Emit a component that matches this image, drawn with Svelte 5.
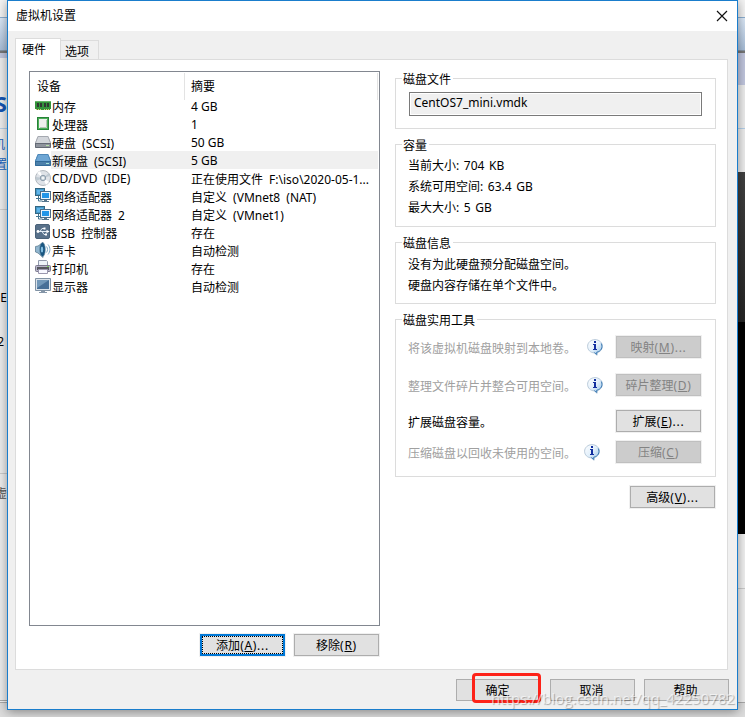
<script>
  let selected = $state(3);

  const devices = [
    { icon: "memory", name: "内存", summary: "4 GB" },
    { icon: "cpu", name: "处理器", summary: "1" },
    { icon: "disk", name: "硬盘 (SCSI)", summary: "50 GB" },
    { icon: "disk-blue", name: "新硬盘 (SCSI)", summary: "5 GB" },
    { icon: "cd", name: "CD/DVD (IDE)", summary: "正在使用文件 F:\\iso\\2020-05-1..." },
    { icon: "network", name: "网络适配器", summary: "自定义 (VMnet8 (NAT)" },
    { icon: "network", name: "网络适配器 2", summary: "自定义 (VMnet1)" },
    { icon: "usb", name: "USB 控制器", summary: "存在" },
    { icon: "sound", name: "声卡", summary: "自动检测" },
    { icon: "printer", name: "打印机", summary: "存在" },
    { icon: "display", name: "显示器", summary: "自动检测" },
  ];

  const utilities = [
    { text: "将该虚拟机磁盘映射到本地卷。", label: "映射", key: "M", dots: "...", disabled: true, row: "map" },
    { text: "整理文件碎片并整合可用空间。", label: "碎片整理", key: "D", dots: "", disabled: true, row: "defrag" },
    { text: "扩展磁盘容量。", label: "扩展", key: "E", dots: "...", disabled: false, row: "expand" },
    { text: "压缩磁盘以回收未使用的空间。", label: "压缩", key: "C", dots: "", disabled: true, row: "compact" },
  ];

  // Latin text sits a pixel higher than Chinese in the list
  const isLatin = (text) => /^[\x00-\x7f]+$/.test(text);
</script>

{#snippet deviceIcon(name)}
  <svg class="icon" width="16" height="16" viewBox="0 0 16 16">
    {#if name === "memory"}
      <path d="M0 3h16v8h-1v1H1v-1H0z" fill="#34933b" />
      <path d="M0 3h16v1H0z" fill="#65b767" />
      <path d="M2 5h2v4H2zM5 5h2v4H5zM9 5h2v4H9zM12 5h2v4h-2z" fill="#303832" />
      <path d="M1 11h1v1H1zM3 11h1v1H3zM5 11h1v1H5zM9 11h1v1H9zM11 11h1v1h-1zM13 11h1v1h-1z" fill="#d9ca70" />
    {:else if name === "cpu"}
      <rect x="2.5" y="1.5" width="11" height="12" fill="#cfe3cc" stroke="#268238" />
      <rect x="3.5" y="2.5" width="9" height="10" fill="#eee" stroke="#4baf58" />
      <path d="M5 11.5h6.5V4" fill="none" stroke="#b7c3b8" />
    {:else if name === "disk" || name === "disk-blue"}
      <path d="M3 2h10l3 7v5H0V9z" fill={name === "disk" ? "#c5c8ce" : "#71a4ce"} />
      <path d="M3 2h10l3 7H0z" fill={name === "disk" ? "#d3d6db" : "#6ea6d4"} />
      <path d="M3 2.5h10M.5 9L3 2.5M15.5 9L13 2.5" fill="none" stroke={name === "disk" ? "#a5a9b0" : "#4f88b8"} />
      <path d="M1 10h14v3H1z" fill={name === "disk" ? "#8f949d" : "#4c80aa"} />
      <path d="M0 9.5h16M.5 9v4.5h15V9" fill="none" stroke={name === "disk" ? "#646a75" : "#326b98"} />
      <path d="M11 11h3v1h-3z" fill={name === "disk" ? "#b9e3a8" : "#a5e4d8"} />
    {:else if name === "cd"}
      <circle cx="8" cy="8" r="7.5" fill="#dfe3e8" stroke="#a3a9b1" stroke-width=".8" />
      <path d="M8 8L2 3l3-2zM8 8l6 4-3 3z" fill="#fff" />
      <path d="M8 8L1 7v4zM8 8l7-2-1-3z" fill="#bfcad2" />
      <circle cx="8" cy="8" r="2.7" fill="#cbd5dc" stroke="#8d9dac" />
      <circle cx="8" cy="8" r="1" fill="#fff" />
    {:else if name === "network"}
      <rect x=".5" y=".5" width="9" height="7" fill="#4698c8" stroke="#336782" />
      <path d="M2 2h6v4H2z" fill="#5fb5ea" />
      <path d="M3.5 8v5h4M1 10.5h5" fill="none" stroke="#447590" />
      <rect x="5.5" y="3.5" width="10" height="8" fill="#eaf5fc" stroke="#4b6d89" />
      <path d="M7 5h7v5H7z" fill="#2396e8" />
      <path d="M9 12h3v1h2v1H7v-1h2z" fill="#56778e" />
    {:else if name === "usb"}
      <rect x=".5" y=".5" width="14" height="14" rx="1.5" fill="#58718a" stroke="#4a6279" />
      <path d="M2 7.5h11M5 7.5l2-3h2M7 7.5l2 3h3" fill="none" stroke="#e1ebf4" />
      <circle cx="3" cy="7.5" r="1.4" fill="#fff" />
      <path d="M8.5 3.5h2v2h-2zM10 9.5h2v2h-2zM11.5 5.7l3 1.8-3 1.8z" fill="#fff" />
    {:else if name === "sound"}
      <path d="M.5 4.500L3 4l5-3.500v15L3 11 .5 10z" fill="#91b6cf" stroke="#52738a" stroke-width=".7" />
      <ellipse cx="7.500" cy="7.500" rx="2.800" ry="7" fill="#195782" stroke="#6d8ea5" stroke-width=".6" />
      <ellipse cx="7" cy="7.500" rx="1.200" ry="3" fill="#83bfe2" />
      <path d="M11.500 4.500c1.400 2 1.400 4 0 6M13 2.500c2.500 3 2.500 7 0 10" fill="none" stroke="#6d9fbd" stroke-width=".9" />
    {:else if name === "printer"}
      <path d="M3.500.5h8l1 1V6h-9z" fill="#edf3fa" stroke="#929aad" />
      <rect x=".5" y="5.500" width="15" height="6" rx="1" fill="#b6b4c8" stroke="#7b788e" />
      <path d="M2 7h12v3H2z" fill="#54565d" />
      <path d="M3.500 9.500h9v4h-9z" fill="#f8f8ff" stroke="#9a97ae" />
      <path d="M12 6h2v1h-2z" fill="#7bcf62" />
    {:else}
      <path d="M.5.5h15v12H.5z" fill="#dce3eb" stroke="#8193a5" />
      <path d="M2 2h12v9H2z" fill="#486f97" />
      <path d="M2 2h12L2 10z" fill="#7398b9" />
      <path d="M6 13h4v1h2v1H4v-1h2z" fill="#8596a8" />
    {/if}
  </svg>
{/snippet}

{#snippet infoIcon()}
  <svg class="info" width="16" height="17" viewBox="0 0 16 17">
    <defs>
      <linearGradient id="bubble" x2="1" y2="1">
        <stop stop-color="#fff" />
        <stop offset=".5" stop-color="#e1effb" />
        <stop offset="1" stop-color="#8ebce4" />
      </linearGradient>
    </defs>
    <path d="M8 .6c4.2 0 7.4 3 7.4 6.7 0 3.2-2.1 5.600-5.300 6.300v2.700l-3-2.400C3.400 13.600.6 11 .6 7.300.6 3.600 3.800.6 8 .6z" fill="url(#bubble)" stroke="#a9bed1" stroke-width=".8" />
    <path d="M14.300 4.500c1.800 4-.3 8-4.600 8.700v2.200l-2.300-1.900" fill="none" stroke="#417eb6" />
    <path d="M7 2h2v2H7zM6 5h3v5h1v1H6v-1h1V6H6z" fill="#112e9f" />
  </svg>
{/snippet}

<div class="desktop">
  <div class="behind left">
    <div class="ribbon"></div>
    <div class="ribbon-edge"></div>
    <div class="page-title"><b>OS</b></div>
    <div class="links"><span>机</span><span>设置</span></div>
    <div class="notes"><span>DE</span><span>2</span></div>
    <div class="description"><span>虚</span></div>
    <div class="status"></div>
  </div>

  <main class="dialog">
    <header class="titlebar">
      <span>虚拟机设置</span>
      <svg width="12" height="12" viewBox="0 0 12 12" aria-label="关闭">
        <path d="M1 1l10 10M11 1L1 11" stroke="#111" stroke-width="1.15" />
      </svg>
    </header>

    <nav class="tabs">
      <div class="tab active">硬件</div>
      <div class="tab">选项</div>
    </nav>

    <section class="panel">
      <div class="hardware">
        <div class="device-list">
          <div class="list-head"><span>设备</span><span>摘要</span></div>
          {#each devices as device, i}
            <!-- svelte-ignore a11y_click_events_have_key_events, a11y_no_static_element_interactions -->
            <div class="device" class:selected={selected === i} onclick={() => (selected = i)}>
              {@render deviceIcon(device.icon)}
              <span class="name" class:latin={isLatin(device.name)}>{device.name}</span>
              <span class="summary" class:latin={isLatin(device.summary)}>{device.summary}</span>
            </div>
          {/each}
        </div>
        <div class="list-actions">
          <button class="focused">添加<span class="key">(<u>A</u>)...</span></button>
          <button>移除<span class="key">(<u>R</u>)</span></button>
        </div>
      </div>

      <div class="details">
        <fieldset class="file">
          <legend>磁盘文件</legend>
          <div class="file-name">CentOS7_mini.vmdk</div>
        </fieldset>
        <fieldset class="capacity">
          <legend>容量</legend>
          <p>当前大小: 704 KB</p>
          <p>系统可用空间: 63.4 GB</p>
          <p>最大大小: 5 GB</p>
        </fieldset>
        <fieldset class="disk-info">
          <legend>磁盘信息</legend>
          <p>没有为此硬盘预分配磁盘空间。</p>
          <p>硬盘内容存储在单个文件中。</p>
        </fieldset>
        <fieldset class="utilities">
          <legend>磁盘实用工具</legend>
          {#each utilities as item}
            <div class="utility {item.row}" class:muted={item.disabled}>
              <span class="hint">{item.text}</span>
              {#if item.disabled}{@render infoIcon()}{/if}
              <button disabled={item.disabled}>{item.label}<span class="key">(<u>{item.key}</u>){item.dots}</span></button>
            </div>
          {/each}
        </fieldset>
        <button class="advanced">高级<span class="key">(<u>V</u>)...</span></button>
      </div>
    </section>

    <footer>
      <button>确定</button>
      <button>取消</button>
      <button>帮助</button>
    </footer>
  </main>

  <div class="behind right">
    <div class="ribbon"></div>
    <div class="ribbon-edge"></div>
    <div class="page-top"></div>
    <div class="page-line"></div>
    <div class="screen-top"></div>
    <div class="screen"></div>
    <div class="page-bottom"></div>
  </div>

  <div class="highlight"></div>
  <div class="watermark">https://blog.csdn.net/qq_42250782</div>
</div>

<style>
  :global(body) {
    margin: 0;
    overflow: hidden;
  }

  .desktop {
    position: relative;
    display: grid;
    grid-template-columns: 7px 731px 7px;
    width: 745px;
    height: 717px;
    overflow: hidden;
    background: #dedede;
    color: #000;
    font: 12px/18px "Noto Sans", "Noto Sans CJK SC", sans-serif;
  }

  .desktop * {
    box-sizing: border-box;
  }

  .dialog {
    z-index: 1;
    display: flex;
    flex-direction: column;
    height: 710px;
    border: 1px solid #1a7dcc;
    background: #f0f0f0;
    box-shadow: 0 2px 10px rgba(0, 0, 0, 0.4);
  }

  .titlebar {
    display: flex;
    flex: none;
    justify-content: space-between;
    align-items: center;
    height: 30px;
    padding: 0 9px 0 8px;
    background: #fff;
  }

  .tabs {
    display: flex;
    flex: none;
    align-items: flex-end;
    height: 29px;
    margin-bottom: -1px;
    padding-left: 7px;
    z-index: 1;
  }

  .tab {
    width: 38px;
    height: 20px;
    padding-left: 4px;
    border: 1px solid #dcdcdc;
    border-left: 0;
    line-height: 21px;
  }

  .tab.active {
    width: 46px;
    height: 22px;
    padding-left: 6px;
    border-left: 1px solid #dcdcdc;
    border-bottom: 0;
    background: #fff;
  }

  .panel {
    display: flex;
    flex: none;
    gap: 15px;
    width: 713px;
    height: 611px;
    margin-left: 7px;
    padding: 11px 11px 0 13px;
    border: 1px solid #dcdcdc;
    background: #fff;
  }

  .hardware {
    width: 351px;
  }

  .device-list {
    height: 555px;
    border: 1px solid #828790;
  }

  .list-head {
    display: grid;
    grid-template-columns: 155px 193px;
    height: 25px;
    padding-top: 1px;
    line-height: 27px;
  }

  .list-head span {
    padding-left: 7px;
    border-right: 1px solid #e3e3e3;
  }

  .list-head span + span {
    padding-left: 6px;
  }

  .device {
    display: grid;
    grid-template-columns: 16px 133px 194px;
    height: 18px;
    padding-left: 5px;
    line-height: 21px;
    white-space: nowrap;
  }

  .device span {
    height: 18px;
  }

  .device.selected .name,
  .device.selected .summary {
    background: #f0f0f0;
  }

  .name {
    padding-left: 1px;
    word-spacing: 3px;
  }

  .summary {
    padding-left: 7px;
    word-spacing: 3px;
  }

  .latin {
    line-height: 19px;
  }

  .summary.latin {
    word-spacing: 0;
  }

  .icon,
  .info {
    display: block;
  }

  .icon {
    margin-top: 1px;
  }

  .list-actions {
    display: flex;
    justify-content: flex-end;
    gap: 9px;
    margin: 8px 1px 0 0;
  }

  button {
    display: block;
    flex: none;
    width: 85px;
    height: 22px;
    padding: 1px 0 0;
    border: 1px solid #adadad;
    border-radius: 0;
    background: #e1e1e1;
    box-shadow: 0 0 0 1px #f0f0f0;
    color: #000;
    font: inherit;
    line-height: 20px;
    white-space: nowrap;
  }

  button:disabled {
    border-color: #bfbfbf;
    background: #ccc;
    color: #838383;
  }

  button.focused {
    border: 2px solid #0078d7;
    padding: 0;
    outline: 1px dotted #000;
    outline-offset: -3px;
  }

  .key {
    letter-spacing: 0.7px;
  }

  u {
    text-underline-offset: 1px;
  }

  .details {
    display: flex;
    flex-direction: column;
    gap: 8px;
    width: 321px;
  }

  fieldset {
    flex: none;
    min-width: 0;
    margin: 0;
    padding: 0 12px;
    border: 1px solid #dcdcdc;
  }

  legend {
    height: 15px;
    margin-left: -6px;
    padding: 0 2px 0 1px;
    line-height: 17px;
  }

  .file {
    height: 58px;
  }

  .file-name {
    height: 24px;
    margin: 6px 1px 0;
    padding-left: 4px;
    border: 1px solid #7a7a7a;
    background: #f0f0f0;
    box-shadow: inset 0 0 0 1px #fff;
    line-height: 20px;
  }

  .capacity {
    height: 90px;
    padding-top: 3px;
    word-spacing: 1.5px;
  }

  p {
    height: 21px;
    margin: 0;
    line-height: 21px;
  }

  .disk-info {
    height: 69px;
    padding-top: 4px;
  }

  .utilities {
    height: 165px;
    padding-top: 9px;
  }

  .utility {
    display: flex;
    align-items: center;
    height: 22px;
  }

  .hint {
    width: 179px;
    padding-top: 3px;
    white-space: nowrap;
  }

  .utility button {
    margin-left: auto;
    margin-right: 2px;
  }

  .muted .hint {
    color: #a0a0a0;
  }

  .defrag {
    margin-top: 16px;
  }

  .expand {
    margin-top: 14px;
  }

  .compact {
    margin-top: 9px;
  }

  .compact .hint {
    width: 176px;
  }

  .advanced {
    align-self: flex-end;
    margin: 1px 1px 0 0;
  }

  footer {
    display: flex;
    justify-content: flex-end;
    gap: 9px;
    padding: 9px 8px 0;
  }

  footer button {
    padding-right: 2px;
    box-shadow: none;
  }

  .behind {
    display: flex;
    flex-direction: column;
    height: 717px;
    overflow: hidden;
    background: #eee;
  }

  .behind > div {
    flex: none;
  }

  .left > div {
    display: flex;
    flex-direction: column;
    align-items: flex-end;
    white-space: nowrap;
  }

  .ribbon {
    height: 51px;
    border-bottom: 1px solid #8695a5;
    background: linear-gradient(#f4f4f4 17px, #8caed0 17px, #8caed0 18px, #dce9f8 18px, #a8bed8);
  }

  .ribbon-edge {
    height: 7px;
    border-top: 2px solid #777;
    background: #c2c7df;
  }

  .page-title {
    height: 71px;
    padding-top: 30px;
    border-bottom: 1px solid #b4d0ea;
    color: #1455b5;
    font-size: 22px;
    line-height: 30px;
  }

  .links {
    height: 81px;
    padding-top: 6px;
    border-bottom: 1px solid #d0d0d0;
    color: #1763bf;
    line-height: 20px;
  }

  .links span:first-child {
    padding-right: 2px;
  }

  .notes {
    height: 264px;
    padding-top: 77px;
    border-bottom: 1px solid #ccc;
    line-height: 22px;
  }

  .notes span + span {
    margin-top: 22px;
    padding-right: 3px;
  }

  .description {
    height: 226px;
    padding-top: 11px;
    color: #555;
  }

  .status {
    height: 17px;
    border-top: 1px solid #aaa;
    background: linear-gradient(#f5f5f5 1px, #aaa 1px, #aaa 2px, #ddd 2px);
  }

  .right .ribbon-edge {
    height: 34px;
  }

  .page-top {
    height: 44px;
    border-bottom: 1px solid #b4d0ea;
  }

  .page-line {
    height: 43px;
  }

  .screen-top {
    height: 150px;
    background: linear-gradient(#414141, #252525);
  }

  .screen {
    height: 212px;
    background: #000;
  }

  .page-bottom {
    height: 183px;
    background: linear-gradient(#f2f2f2 54px, #ccc 54px, #ccc 55px, #f0f0f0 55px, #f0f0f0 168px, #aaa 168px, #aaa 169px, #ddd 169px);
  }

  /* marker drawn over the OK button */
  .highlight {
    position: absolute;
    z-index: 2;
    left: 472px;
    top: 673px;
    width: 69px;
    height: 30px;
    border: 3px solid #fd2218;
    border-radius: 4px;
  }

  .watermark {
    position: absolute;
    z-index: 3;
    left: 491px;
    top: 687px;
    color: rgba(255, 255, 255, 0.65);
    font: 15px/22px "Open Sans", sans-serif;
    text-shadow: 1px 1px 1px rgba(0, 0, 0, 0.3);
    white-space: nowrap;
  }
</style>
